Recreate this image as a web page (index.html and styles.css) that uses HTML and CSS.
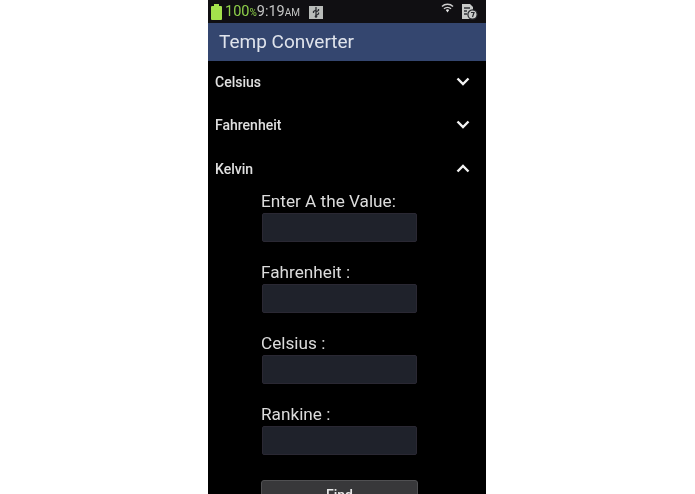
FILE: index.html
```html
<!DOCTYPE html>
<html lang="en">
<head>
<meta charset="utf-8">
<title>Temp Converter</title>
<link rel="stylesheet" href="styles.css">
</head>
<body>
<main class="phone">
  <header class="status">
    <div class="battery"></div>
    <span class="pct">100<small>%</small></span>
    <span class="clock">9:19<small>AM</small></span>
    <svg class="usb" width="14" height="13" viewBox="0 0 14 13"><rect width="14" height="13" fill="#b9bcb9"/><path d="M7 1v10M7 4 4.500 5.500v1.500M7 6l2.500-1.500V3M7 9.500 9.500 8V6.500" stroke="#2a2c30" stroke-width="1.300" fill="none"/><circle cx="7" cy="10.500" r="1.300" fill="#2a2c30"/></svg>
    <svg class="wifi" width="13" height="10" viewBox="0 0 13 10"><path d="M1 3.500C4 .5 9 .5 12 3.500M3 5.800c2-1.800 5-1.800 7 0" stroke="#cfcfcf" stroke-width="1.500" fill="none"/><path d="M4.800 7 6.500 9.500 8.200 7a2.500 2.500 0 0 0-3.400 0z" fill="#e6e6e6"/></svg>
    <svg class="sim" width="17" height="16" viewBox="0 0 17 16"><path d="M1 0h8l3 3v12H1z" fill="#c9cbc9"/><path d="M3 4h6M3 7h3M3 10h3" stroke="#33363a" stroke-width="1.300"/><circle cx="11.500" cy="10.500" r="4.600" fill="#c9cbc9" stroke="#26282c" stroke-width="1.200"/><path d="M10 8.500h3L11.500 13" stroke="#26282c" stroke-width="1.200" fill="none"/></svg>
  </header>
  <div class="appbar">Temp Converter</div>

  <section class="row">
    <span>Celsius</span>
    <svg class="chev" width="14" height="9" viewBox="0 0 14 9"><path d="M1.500 1.500 7 7l5.500-5.500" /></svg>
  </section>
  <section class="row">
    <span>Fahrenheit</span>
    <svg class="chev" width="14" height="9" viewBox="0 0 14 9"><path d="M1.500 1.500 7 7l5.500-5.500" /></svg>
  </section>
  <section class="row">
    <span>Kelvin</span>
    <svg class="chev" width="14" height="9" viewBox="0 0 14 9"><path d="M1.500 7.500 7 2l5.500 5.500" /></svg>
  </section>

  <form class="form">
    <label class="field">Enter A the Value:<input class="input" type="text"></label>
    <label class="field">Fahrenheit :<input class="input" type="text"></label>
    <label class="field">Celsius :<input class="input" type="text"></label>
    <label class="field">Rankine :<input class="input" type="text"></label>
    <button class="find" type="button">Find</button>
  </form>
</main>
</body>
</html>
```
FILE: styles.css
```css
* { box-sizing: border-box; }
html, body { margin: 0; height: 494px; background: #fff; overflow: hidden; }
body { font-family: Roboto, "Noto Sans", sans-serif; }
.phone {
  width: 278px;
  height: 494px;
  margin-left: 208px;
  background: #000;
  color: #eee;
  overflow: hidden;
  filter: blur(0.4px);
}
.status {
  height: 23px;
  background: #100f12;
  display: flex;
  align-items: center;
  padding: 0 0 0 3px;
}
.battery {
  position: relative;
  width: 11px;
  height: 14px;
  margin-top: 2px;
  background: #a4e24c;
  border-radius: 1px;
}
.battery::before {
  content: "";
  position: absolute;
  top: -2px;
  left: 3px;
  width: 5px;
  height: 2px;
  background: #a4e24c;
}
.pct {
  margin-left: 3px;
  font-size: 14.500px;
  color: #8fd04a;
}
.pct small { font-size: 10px; }
.clock {
  font-size: 14.500px;
  color: #c4c5c4;
}
.clock small { font-size: 10px; }
.usb { margin-left: 9px; margin-top: 2px; }
.wifi { margin-left: auto; margin-top: -7px; }
.sim { margin-left: 7px; margin-right: 8px; margin-top: 1px; }
.appbar {
  height: 38px;
  background: #34466f;
  color: #e0e4ec;
  font-size: 19px;
  line-height: 37px;
  padding-left: 11px;
}
.row {
  height: 43.500px;
  display: flex;
  align-items: center;
  justify-content: space-between;
  padding: 0 16px 2px 7px;
  font-size: 14px;
  font-weight: 500;
  color: #e0e0e0;
}
.chev { margin-top: -1px; }
.chev path { fill: none; stroke: #f2f2f2; stroke-width: 2.400; }
.form {
  display: flex;
  flex-direction: column;
  gap: 20px;
  padding: 0 0 0 53px;
  margin-top: -1px;
}
.field {
  display: flex;
  flex-direction: column;
  font-size: 17.200px;
  line-height: 21px;
  color: #dcdcdc;
  height: 51px;
}
.input {
  display: block;
  width: 155px;
  height: 29px;
  margin: 1px 0 0 1px;
  background: #1f222b;
  border: 1px solid #2a2833;
  border-radius: 2px;
  padding: 0;
}
.find {
  width: 157px;
  height: 30px;
  background: #38383a;
  border: 1px solid #505052;
  border-radius: 3px;
  color: #e8e8e8;
  font: 500 14px Roboto, sans-serif;
  padding: 0;
  margin-top: 5px;
  flex: none;
}
```
